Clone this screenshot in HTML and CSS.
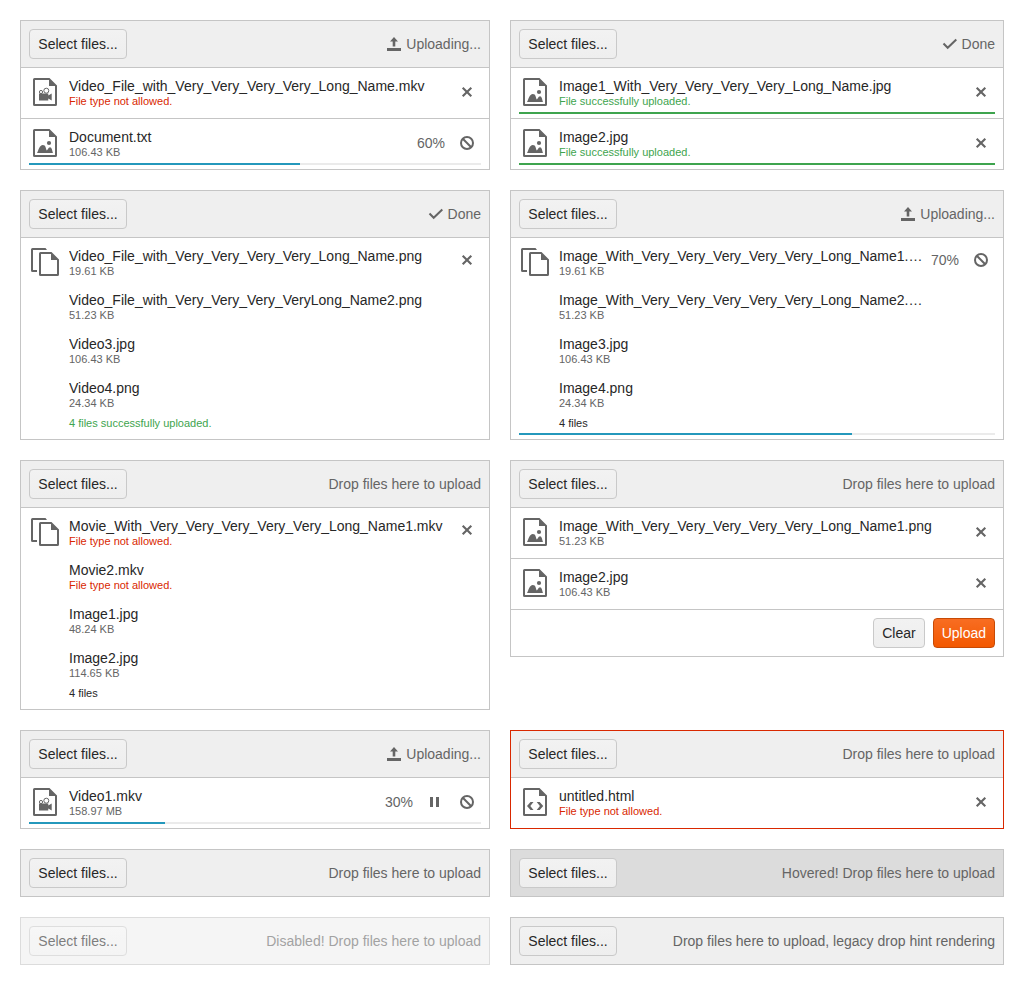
FILE: index.html
```html
<!DOCTYPE html>
<html lang="en">
<head>
<meta charset="utf-8">
<title>Upload</title>
<link rel="stylesheet" href="styles.css">
</head>
<body>
<svg class="sprite" aria-hidden="true">
  <symbol id="file" viewBox="0 0 24 28"><path fill-rule="evenodd" d="M1.500 0H16.500L24 7.500V26.500Q24 28 22.500 28H1.500Q0 28 0 26.500V1.500Q0 0 1.500 0ZM2 2V26H22V8H16V2Z"/></symbol>
  <symbol id="image" viewBox="0 0 24 28"><use href="#file" width="24" height="28"/><circle cx="16" cy="14" r="2.100"/><path d="M4 24C5.500 21.500 6.500 16 9.800 16S12.500 19.500 13.800 21.500C14.800 21 15.200 18.300 17 18.300S19.200 22 20 24Z"/></symbol>
  <symbol id="video" viewBox="0 0 24 28"><use href="#file" width="24" height="28"/><g fill="none" stroke="currentColor"><circle cx="8" cy="14" r="1.600"/><circle cx="13.300" cy="12.700" r="2.500"/></g><path d="M6 15.600H15.300V17.500L18.700 15.500V22.500L15.300 20.500V22.400H6Z"/></symbol>
  <symbol id="code" viewBox="0 0 24 28"><use href="#file" width="24" height="28"/><path d="M7.500 14H10.500L7.300 18L10.500 22H7.500L4 18ZM16.700 14H13.700L16.900 18L13.700 22H16.700L20.200 18Z"/></symbol>
  <symbol id="files" viewBox="0 0 28 28"><path d="M1.500 0H14.500L16 2H2V22H6V24H1.500Q0 24 0 22.500V1.500Q0 0 1.500 0Z"/><path fill-rule="evenodd" d="M9.500 4H20.500L28 11.500V26.500Q28 28 26.500 28H9.500Q8 28 8 26.500V5.500Q8 4 9.500 4ZM10 6V26H26V12H20V6Z"/></symbol>
  <symbol id="close" viewBox="0 0 16 16"><path fill="none" stroke="currentColor" stroke-width="2.100" d="M3.700 3.700L12.300 12.300M12.300 3.700L3.700 12.300"/></symbol>
  <symbol id="cancel" viewBox="0 0 16 16"><g fill="none" stroke="currentColor" stroke-width="2"><circle cx="8" cy="8" r="6"/><path d="M3.800 3.800L12.200 12.200"/></g></symbol>
  <symbol id="pause" viewBox="0 0 16 16"><path d="M3 3H6V13H3ZM9 3H12V13H9Z"/></symbol>
  <symbol id="check" viewBox="0 0 16 16"><path fill="none" stroke="currentColor" stroke-width="2" d="M1.500 7.500L5.700 11.800L14.300 3.500"/></symbol>
  <symbol id="upload" viewBox="0 0 16 16"><path d="M1 12H15V15H1ZM8 1L12 5.500H9.300V10.500H6.700V5.500H4Z"/></symbol>
</svg>

<main class="demo">
  <section class="upload">
    <header class="dropzone">
      <button class="button select" type="button">Select files...</button>
      <span class="status"><svg class="icon"><use href="#upload"/></svg>Uploading...</span>
    </header>
    <ul class="list">
      <li class="item">
        <div class="body">
          <span class="type"><svg class="file-icon"><use href="#video"/></svg></span>
          <div class="files"><div class="file"><span class="name">Video_File_with_Very_Very_Very_Very_Long_Name.mkv</span><span class="note error">File type not allowed.</span></div></div>
          <div class="actions"><button class="action" type="button" aria-label="Remove"><svg class="icon"><use href="#close"/></svg></button></div>
        </div>
      </li>
      <li class="item">
        <div class="body">
          <span class="type"><svg class="file-icon"><use href="#image"/></svg></span>
          <div class="files"><div class="file"><span class="name">Document.txt</span><span class="note">106.43 KB</span></div></div>
          <div class="actions"><span class="percent">60%</span><button class="action" type="button" aria-label="Cancel"><svg class="icon"><use href="#cancel"/></svg></button></div>
        </div>
        <div class="track"><div class="bar" style="width:60%"></div></div>
      </li>
    </ul>
  </section>

  <section class="upload">
    <header class="dropzone">
      <button class="button select" type="button">Select files...</button>
      <span class="status"><svg class="icon"><use href="#check"/></svg>Done</span>
    </header>
    <ul class="list">
      <li class="item">
        <div class="body">
          <span class="type"><svg class="file-icon"><use href="#image"/></svg></span>
          <div class="files"><div class="file"><span class="name">Image1_With_Very_Very_Very_Very_Long_Name.jpg</span><span class="note success">File successfully uploaded.</span></div></div>
          <div class="actions"><button class="action" type="button" aria-label="Remove"><svg class="icon"><use href="#close"/></svg></button></div>
        </div>
        <div class="track"><div class="bar complete" style="width:100%"></div></div>
      </li>
      <li class="item">
        <div class="body">
          <span class="type"><svg class="file-icon"><use href="#image"/></svg></span>
          <div class="files"><div class="file"><span class="name">Image2.jpg</span><span class="note success">File successfully uploaded.</span></div></div>
          <div class="actions"><button class="action" type="button" aria-label="Remove"><svg class="icon"><use href="#close"/></svg></button></div>
        </div>
        <div class="track"><div class="bar complete" style="width:100%"></div></div>
      </li>
    </ul>
  </section>

  <section class="upload">
    <header class="dropzone">
      <button class="button select" type="button">Select files...</button>
      <span class="status"><svg class="icon"><use href="#check"/></svg>Done</span>
    </header>
    <ul class="list">
      <li class="item batch">
        <div class="body">
          <span class="type"><svg class="files-icon"><use href="#files"/></svg></span>
          <div class="files">
            <div class="file"><span class="name">Video_File_with_Very_Very_Very_Very_Long_Name.png</span><span class="note">19.61 KB</span></div>
            <div class="file"><span class="name">Video_File_with_Very_Very_Very_VeryLong_Name2.png</span><span class="note">51.23 KB</span></div>
            <div class="file"><span class="name">Video3.jpg</span><span class="note">106.43 KB</span></div>
            <div class="file"><span class="name">Video4.png</span><span class="note">24.34 KB</span></div>
            <span class="summary success">4 files successfully uploaded.</span>
          </div>
          <div class="actions"><button class="action" type="button" aria-label="Remove"><svg class="icon"><use href="#close"/></svg></button></div>
        </div>
      </li>
    </ul>
  </section>

  <section class="upload">
    <header class="dropzone">
      <button class="button select" type="button">Select files...</button>
      <span class="status"><svg class="icon"><use href="#upload"/></svg>Uploading...</span>
    </header>
    <ul class="list">
      <li class="item batch">
        <div class="body">
          <span class="type"><svg class="files-icon"><use href="#files"/></svg></span>
          <div class="files">
            <div class="file"><span class="name">Image_With_Very_Very_Very_Very_Very_Long_Name1.png</span><span class="note">19.61 KB</span></div>
            <div class="file"><span class="name">Image_With_Very_Very_Very_Very_Very_Long_Name2.png</span><span class="note">51.23 KB</span></div>
            <div class="file"><span class="name">Image3.jpg</span><span class="note">106.43 KB</span></div>
            <div class="file"><span class="name">Image4.png</span><span class="note">24.34 KB</span></div>
            <span class="summary">4 files</span>
          </div>
          <div class="actions"><span class="percent">70%</span><button class="action" type="button" aria-label="Cancel"><svg class="icon"><use href="#cancel"/></svg></button></div>
        </div>
        <div class="track"><div class="bar" style="width:70%"></div></div>
      </li>
    </ul>
  </section>

  <section class="upload">
    <header class="dropzone">
      <button class="button select" type="button">Select files...</button>
      <span class="status">Drop files here to upload</span>
    </header>
    <ul class="list">
      <li class="item batch">
        <div class="body">
          <span class="type"><svg class="files-icon"><use href="#files"/></svg></span>
          <div class="files">
            <div class="file"><span class="name">Movie_With_Very_Very_Very_Very_Very_Long_Name1.mkv</span><span class="note error">File type not allowed.</span></div>
            <div class="file"><span class="name">Movie2.mkv</span><span class="note error">File type not allowed.</span></div>
            <div class="file"><span class="name">Image1.jpg</span><span class="note">48.24 KB</span></div>
            <div class="file"><span class="name">Image2.jpg</span><span class="note">114.65 KB</span></div>
            <span class="summary">4 files</span>
          </div>
          <div class="actions"><button class="action" type="button" aria-label="Remove"><svg class="icon"><use href="#close"/></svg></button></div>
        </div>
      </li>
    </ul>
  </section>

  <section class="upload">
    <header class="dropzone">
      <button class="button select" type="button">Select files...</button>
      <span class="status">Drop files here to upload</span>
    </header>
    <ul class="list">
      <li class="item">
        <div class="body">
          <span class="type"><svg class="file-icon"><use href="#image"/></svg></span>
          <div class="files"><div class="file"><span class="name">Image_With_Very_Very_Very_Very_Very_Long_Name1.png</span><span class="note">51.23 KB</span></div></div>
          <div class="actions"><button class="action" type="button" aria-label="Remove"><svg class="icon"><use href="#close"/></svg></button></div>
        </div>
      </li>
      <li class="item">
        <div class="body">
          <span class="type"><svg class="file-icon"><use href="#image"/></svg></span>
          <div class="files"><div class="file"><span class="name">Image2.jpg</span><span class="note">106.43 KB</span></div></div>
          <div class="actions"><button class="action" type="button" aria-label="Remove"><svg class="icon"><use href="#close"/></svg></button></div>
        </div>
      </li>
    </ul>
    <footer class="footer">
      <button class="button" type="button">Clear</button>
      <button class="button primary" type="button">Upload</button>
    </footer>
  </section>

  <section class="upload">
    <header class="dropzone">
      <button class="button select" type="button">Select files...</button>
      <span class="status"><svg class="icon"><use href="#upload"/></svg>Uploading...</span>
    </header>
    <ul class="list">
      <li class="item">
        <div class="body">
          <span class="type"><svg class="file-icon"><use href="#video"/></svg></span>
          <div class="files"><div class="file"><span class="name">Video1.mkv</span><span class="note">158.97 MB</span></div></div>
          <div class="actions"><span class="percent">30%</span><button class="action" type="button" aria-label="Pause"><svg class="icon"><use href="#pause"/></svg></button><button class="action" type="button" aria-label="Cancel"><svg class="icon"><use href="#cancel"/></svg></button></div>
        </div>
        <div class="track"><div class="bar" style="width:30%"></div></div>
      </li>
    </ul>
  </section>

  <section class="upload invalid">
    <header class="dropzone">
      <button class="button select" type="button">Select files...</button>
      <span class="status">Drop files here to upload</span>
    </header>
    <ul class="list">
      <li class="item">
        <div class="body">
          <span class="type"><svg class="file-icon"><use href="#code"/></svg></span>
          <div class="files"><div class="file"><span class="name">untitled.html</span><span class="note error">File type not allowed.</span></div></div>
          <div class="actions"><button class="action" type="button" aria-label="Remove"><svg class="icon"><use href="#close"/></svg></button></div>
        </div>
      </li>
    </ul>
  </section>

  <section class="upload">
    <header class="dropzone">
      <button class="button select" type="button">Select files...</button>
      <span class="status">Drop files here to upload</span>
    </header>
  </section>

  <section class="upload">
    <header class="dropzone hovered">
      <button class="button select" type="button">Select files...</button>
      <span class="status">Hovered! Drop files here to upload</span>
    </header>
  </section>

  <section class="upload disabled">
    <header class="dropzone">
      <button class="button select" type="button" disabled>Select files...</button>
      <span class="status">Disabled! Drop files here to upload</span>
    </header>
  </section>

  <section class="upload">
    <header class="dropzone">
      <button class="button select" type="button">Select files...</button>
      <span class="status">Drop files here to upload, legacy drop hint rendering</span>
    </header>
  </section>
</main>
</body>
</html>
```
FILE: styles.css
```css
* {
  box-sizing: border-box;
}

body {
  margin: 0;
  background: #fff;
  color: #272727;
  font: 14px/20px "Liberation Sans", Arial, sans-serif;
}

.sprite {
  display: none;
}

.demo {
  display: grid;
  grid-template-columns: minmax(0, 470fr) minmax(0, 494fr);
  gap: 20px;
  align-items: start;
  padding: 20px;
}

.upload {
  border: 1px solid #c5c5c5;
  background: #fff;
}

.upload.invalid {
  border-color: #d92800;
}

.upload.disabled {
  opacity: 0.6;
}

.dropzone {
  display: flex;
  align-items: center;
  justify-content: space-between;
  padding: 8px;
  background: #efefef;
}

.dropzone.hovered {
  background: #dcdcdc;
}

.button {
  height: 30px;
  padding: 0 8px;
  border: 1px solid #c9c9c9;
  border-radius: 4px;
  background: linear-gradient(#f2f2f2, #eeeeee);
  color: #272727;
  font: inherit;
  white-space: nowrap;
}

.button.select {
  min-width: 98px;
}

.button.primary {
  border-color: #c74a05;
  background: linear-gradient(#f86d22, #f35800);
  color: #fff;
}

.status {
  display: flex;
  align-items: center;
  gap: 4px;
  color: #656565;
}

.icon {
  display: block;
  width: 16px;
  height: 16px;
  fill: currentColor;
}

.list {
  margin: 0;
  padding: 0;
  list-style: none;
}

.item {
  min-height: 51px;
  padding: 8px 8px 4px;
  border-top: 1px solid #c5c5c5;
}

.body {
  display: flex;
  gap: 8px;
  min-height: 36px;
}

.type {
  display: flex;
  flex: none;
  align-items: center;
  justify-content: center;
  width: 32px;
  height: 32px;
  color: #656565;
}

.file-icon {
  width: 24px;
  height: 28px;
  fill: currentColor;
}

.files-icon {
  width: 28px;
  height: 28px;
  fill: currentColor;
}

.files {
  display: flex;
  flex: 1;
  flex-direction: column;
  gap: 13px;
  min-width: 0;
}

.name {
  display: block;
  overflow: hidden;
  text-overflow: ellipsis;
  white-space: nowrap;
}

.note {
  display: block;
  color: #656565;
  font-size: 11px;
  line-height: 11px;
}

.summary {
  margin-top: -4px;
  font-size: 11px;
  line-height: 11px;
}

.error {
  color: #d92800;
}

.success {
  color: #3ea44e;
}

.actions {
  display: flex;
  flex: none;
  align-items: center;
  gap: 4px;
  height: 32px;
  color: #656565;
}

.percent {
  margin-right: 4px;
}

.action {
  display: flex;
  align-items: center;
  justify-content: center;
  width: 28px;
  height: 28px;
  padding: 0;
  border: 0;
  background: none;
  color: inherit;
}

.batch {
  padding-bottom: 6px;
}

.batch .body {
  padding-bottom: 4px;
}

.batch:has(.track) {
  padding-bottom: 4px;
}

.batch .actions {
  height: 28px;
}

.track {
  height: 2px;
  background: #ebebeb;
}

.bar {
  height: 2px;
  background: #2498bc;
}

.bar.complete {
  background: #3ea44e;
}

.footer {
  display: flex;
  justify-content: flex-end;
  gap: 8px;
  padding: 8px;
  border-top: 1px solid #c5c5c5;
}
```
